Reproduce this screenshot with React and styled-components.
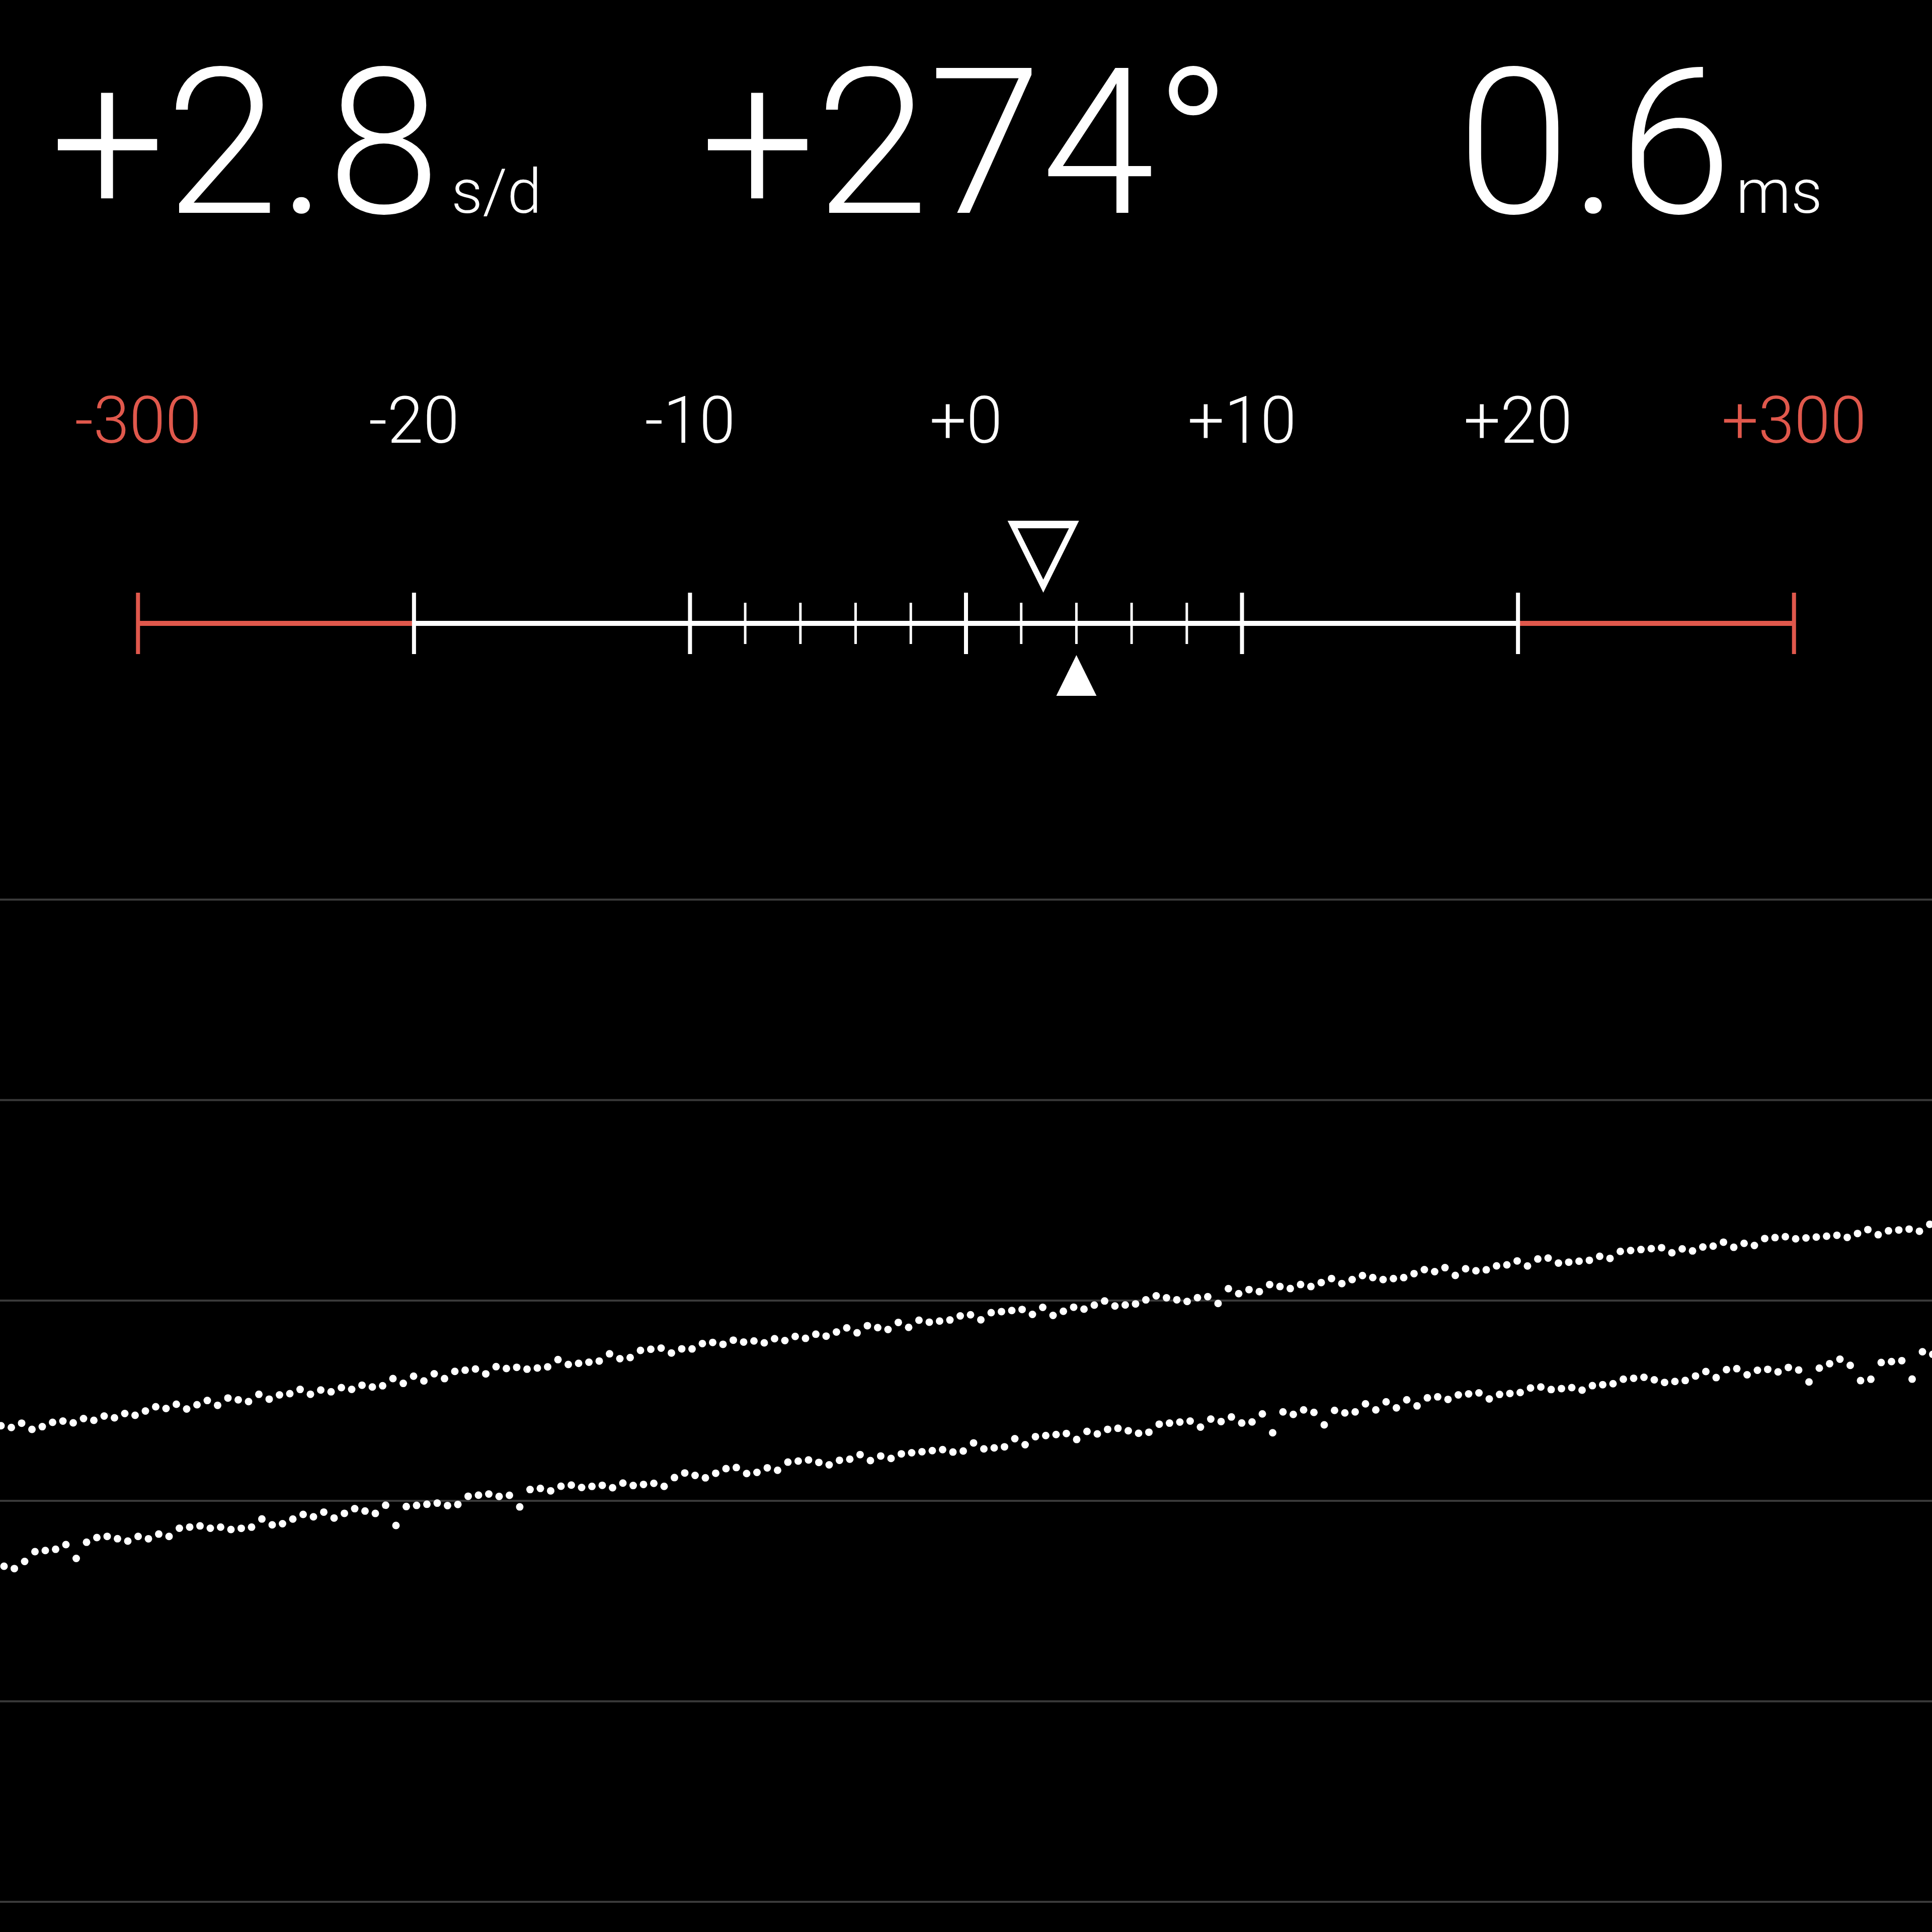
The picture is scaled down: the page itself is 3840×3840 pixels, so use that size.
import React from 'react';
import styled, {createGlobalStyle} from 'styled-components';

const W = 3840;
const COL = W / 7;            // one column of the scale
const UNIT = COL / 10;        // px per s/d inside ±20
const CENTER = W / 2;

const RED = '#e0584c';
const GRID = '#3a3a3a';

const LABELS = [
    {text: '-300', alert: true},
    {text: '-20'},
    {text: '-10'},
    {text: '+0'},
    {text: '+10'},
    {text: '+20'},
    {text: '+300', alert: true},
];

/* 점 데이터용 시드 난수 */
const seeded = (seed) => () => {
    seed = (Math.imul(seed, 1664525) + 1013904223) >>> 0;
    return seed / 4294967296;
};

const SERIES = [
    {x0: 2, a: 2840, b: -0.1245, c: 5.23e-6, step: 6, spike: 0.04, drop: 12, seed: 7},
    {x0: 8, a: 3085, b: -0.1149, c: 3.27e-6, step: 7, spike: 0.09, drop: 30, seed: 19},
];

const buildDots = ({x0, a, b, c, step, spike, drop, seed}) => {
    const rand = seeded(seed);
    const dots = [];
    for (let x = x0; x < W + 10; x += 20.5) {
        let y = a + b * x + c * x * x;
        y += (Math.floor(rand() * 3) - 1) * step;
        if (rand() < spike * (1.5 - x / W)) y += drop * (0.7 + rand() * 0.6);
        dots.push({x, y});
    }
    return dots;
};

const DOTS = SERIES.map(buildDots);
const GRID_LINES = [1788, 2186.5, 2585, 2983, 3381.5, 3780];

const GlobalStyle = createGlobalStyle`
    html, body {
        margin: 0;
        padding: 0;
        background: #000;
    }
`;

const Screen = styled.div`
    width: ${W}px;
    height: 3840px;
    overflow: hidden;
    background: #000;
    color: #fff;
    display: flex;
    flex-direction: column;
    font-family: Roboto, "Liberation Sans", sans-serif;
    font-weight: 300;
`;

const StatsRow = styled.div`
    display: grid;
    grid-template-columns: repeat(3, 1fr);
    padding-top: 82px;
    font-size: 405px;
    line-height: 405px;
`;

const Stat = styled.div`
    justify-self: ${p => p.$align};
    margin-left: ${p => p.$left || 0}px;
    margin-right: ${p => p.$right || 0}px;
    white-space: nowrap;
`;

const Unit = styled.span`
    font-size: 123px;
    line-height: 1;
    margin-left: ${p => p.$gap || 8}px;
`;

const ScaleLabels = styled.div`
    display: grid;
    grid-template-columns: repeat(7, 1fr);
    margin-top: 284px;
    font-size: 129px;
    line-height: 129px;
`;

const ScaleLabel = styled.div`
    text-align: center;
    color: ${p => p.$alert ? RED : '#fff'};
`;

const Gauge = styled.svg`
    display: block;
    margin-top: 130px;
    width: ${W}px;
    height: 360px;
`;

const Chart = styled.svg`
    display: block;
    margin-top: 370px;
    width: ${W}px;
    height: 2080px;
`;

const tickX = (i) => (i + 0.5) * COL;

const ScaleGauge = ({reading, target}) => {
    const y = 1239;
    const majors = LABELS.map((_, i) => tickX(i));
    const minors = [-4, -3, -2, -1, 1, 2, 3, 4].map(n => CENTER + n * COL / 5);
    const hx = CENTER + reading * UNIT;
    const fx = CENTER + target * UNIT;
    return (
        <Gauge viewBox={`0 1030 ${W} 360`}>
            <line x1={majors[0]} y1={y} x2={majors[1]} y2={y} stroke={RED} strokeWidth="10"/>
            <line x1={majors[1]} y1={y} x2={majors[5]} y2={y} stroke="#fff" strokeWidth="10"/>
            <line x1={majors[5]} y1={y} x2={majors[6]} y2={y} stroke={RED} strokeWidth="10"/>
            {majors.map((x, i) => (
                <line key={i} x1={x} y1="1178" x2={x} y2="1300" strokeWidth="8"
                      stroke={i === 0 || i === 6 ? RED : '#fff'}/>
            ))}
            {minors.map((x, i) => (
                <line key={i} x1={x} y1="1198" x2={x} y2="1280" stroke="#fff" strokeWidth="5"/>
            ))}
            <path fill="#fff" fillRule="evenodd"
                  d={`M${hx - 71} 1035 L${hx + 71} 1035 L${hx} 1178 Z M${hx - 51} 1050 L${hx} 1152 L${hx + 51} 1050 Z`}/>
            <path fill="#fff" d={`M${fx} 1302 L${fx + 40} 1383 L${fx - 40} 1383 Z`}/>
        </Gauge>
    );
};

const DriftChart = () => (
    <Chart viewBox={`0 1760 ${W} 2080`}>
        {GRID_LINES.map(y => (
            <line key={y} x1="0" y1={y} x2={W} y2={y} stroke={GRID} strokeWidth="4"/>
        ))}
        {DOTS.map((series, s) => series.map((d, i) => (
            <circle key={`${s}-${i}`} cx={d.x} cy={d.y} r="7.5" fill="#fff"/>
        )))}
    </Chart>
);

const App = () => {
    return (
        <Screen>
            <GlobalStyle/>
            <StatsRow>
                <Stat $align="start" $left={100}>+2.8<Unit $gap={22}>s/d</Unit></Stat>
                <Stat $align="center">+274°</Stat>
                <Stat $align="end" $right={218}>0.6<Unit>ms</Unit></Stat>
            </StatsRow>
            <ScaleLabels>
                {LABELS.map(l => (
                    <ScaleLabel key={l.text} $alert={l.alert}>{l.text}</ScaleLabel>
                ))}
            </ScaleLabels>
            <ScaleGauge reading={2.8} target={4}/>
            <DriftChart/>
        </Screen>
    );
};

export default App;
